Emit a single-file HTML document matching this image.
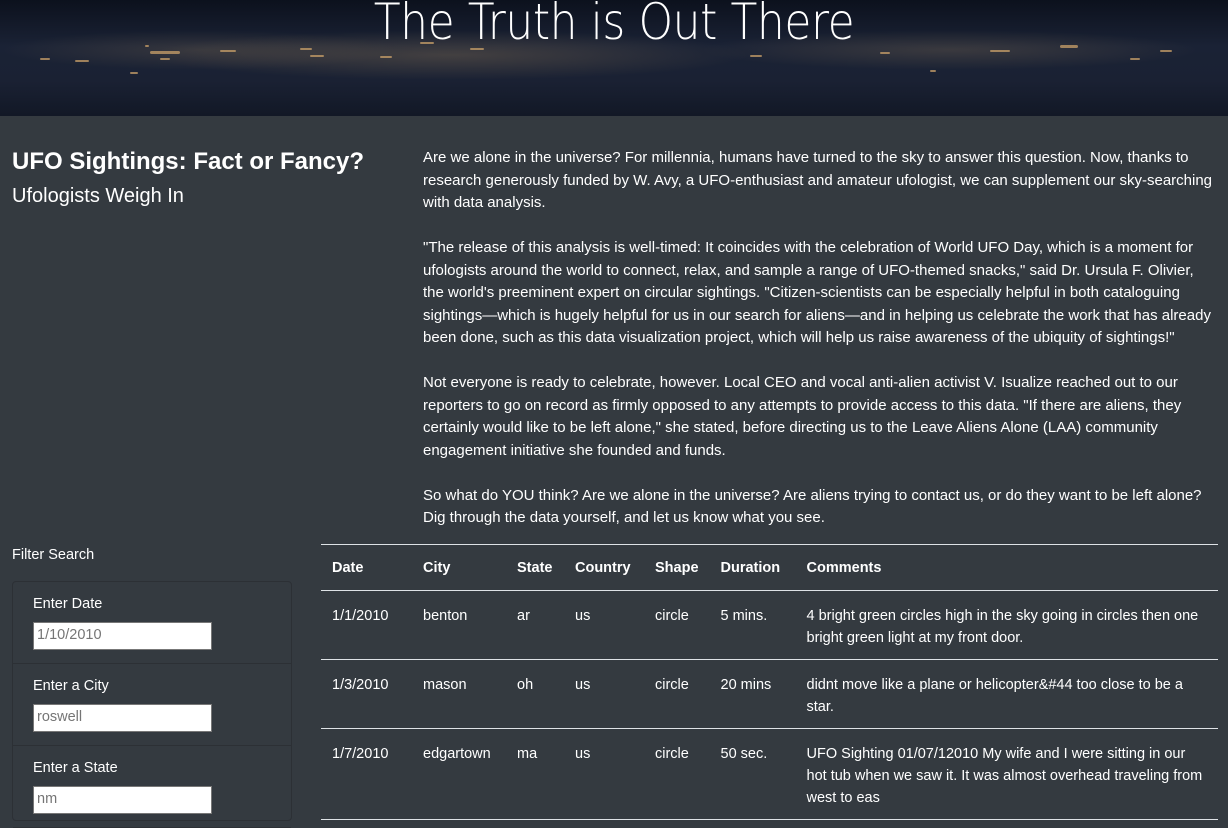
<!DOCTYPE html>
<html><head><style>
*{box-sizing:border-box;margin:0;padding:0}
body{width:1228px;height:816px;overflow:hidden;background:#343a40;color:#fff;font-family:"Liberation Sans",sans-serif;font-size:15px;position:relative}
.hero{position:absolute;left:0;top:0;width:1228px;height:116px;overflow:hidden;
background:radial-gradient(ellipse 300px 25px at 450px 55px,rgba(255,200,120,.18),transparent),
radial-gradient(ellipse 250px 20px at 950px 50px,rgba(255,200,120,.14),transparent),
radial-gradient(ellipse 200px 20px at 200px 50px,rgba(255,200,120,.12),transparent),
linear-gradient(180deg,#0c111d 0%,#1a2235 40%,#1a2133 70%,#121826 100%)}
.hero i{position:absolute;width:4px;height:2px;background:#c9a06a;border-radius:2px;opacity:.75}
.hero h1{position:absolute;left:0;width:100%;top:-7px;text-align:center;font-family:"DejaVu Sans ExtraLight","DejaVu Sans",sans-serif;font-weight:200;font-size:50px;color:#fff;transform:scaleX(0.88);letter-spacing:-0.5px}
.l1{position:absolute;left:12px;top:148px;font-size:24px;font-weight:bold}
.l2{position:absolute;left:12px;top:185px;font-size:20px}
.txt{position:absolute;left:423px;top:147px;width:795px;line-height:22.5px;font-size:15px}
.txt p{margin-bottom:22.5px}
.fs{position:absolute;left:12px;top:547px;font-size:14.5px}
.panel{position:absolute;left:12px;top:581px;width:280px;height:240px;border:1px solid #2c3035;border-radius:4px}
.it{height:82px;border-bottom:1px solid #2c3035;padding:14px 0 0 20px}
.it label{display:block;font-size:14.5px;margin-bottom:10px}
.it div{width:179px;height:28px;background:#fff;border:1px solid #777;color:#757575;font-size:14.5px;padding:4px 3px}
table{position:absolute;left:321px;top:544px;width:897px;border-collapse:collapse;font-size:14.5px}
th{text-align:left;font-weight:bold;height:46px;border-top:1px solid #dee2e6;border-bottom:1px solid #dee2e6;padding:0 11px;vertical-align:middle}
td{vertical-align:top;padding:14px 11px 10px;line-height:22px;border-bottom:1px solid #dee2e6}
</style></head><body>
<div class="hero">
<i style="left:145px;top:45px"></i><i style="left:160px;top:58px;width:10px"></i><i style="left:75px;top:60px;width:14px"></i><i style="left:130px;top:72px;width:8px"></i>
<i style="left:220px;top:50px;width:16px"></i><i style="left:300px;top:48px;width:12px"></i><i style="left:40px;top:58px;width:10px"></i>
<i style="left:150px;top:51px;width:30px;height:3px"></i><i style="left:310px;top:55px;width:14px"></i>
<i style="left:420px;top:42px;width:14px"></i><i style="left:470px;top:48px;width:14px"></i>
<i style="left:380px;top:56px;width:12px"></i><i style="left:750px;top:55px;width:12px"></i>
<i style="left:880px;top:52px;width:10px"></i><i style="left:990px;top:50px;width:20px"></i>
<i style="left:1060px;top:45px;width:18px;height:3px"></i><i style="left:1160px;top:50px;width:12px"></i>
<i style="left:1130px;top:58px;width:10px"></i><i style="left:930px;top:70px;width:6px"></i>
<h1>The Truth is Out There</h1></div>
<div class="l1">UFO Sightings: Fact or Fancy?</div>
<div class="l2">Ufologists Weigh In</div>
<div class="txt">
<p>Are we alone in the universe? For millennia, humans have turned to the sky to answer this question. Now, thanks to research generously funded by W. Avy, a UFO-enthusiast and amateur ufologist, we can supplement our sky-searching with data analysis.</p>
<p>"The release of this analysis is well-timed: It coincides with the celebration of World UFO Day, which is a moment for ufologists around the world to connect, relax, and sample a range of UFO-themed snacks," said Dr. Ursula F. Olivier, the world's preeminent expert on circular sightings. "Citizen-scientists can be especially helpful in both cataloguing sightings—which is hugely helpful for us in our search for aliens—and in helping us celebrate the work that has already been done, such as this data visualization project, which will help us raise awareness of the ubiquity of sightings!"</p>
<p>Not everyone is ready to celebrate, however. Local CEO and vocal anti-alien activist V. Isualize reached out to our reporters to go on record as firmly opposed to any attempts to provide access to this data. "If there are aliens, they certainly would like to be left alone," she stated, before directing us to the Leave Aliens Alone (LAA) community engagement initiative she founded and funds.</p>
<p>So what do YOU think? Are we alone in the universe? Are aliens trying to contact us, or do they want to be left alone? Dig through the data yourself, and let us know what you see.</p>
</div>
<div class="fs">Filter Search</div>
<div class="panel">
<div class="it"><label>Enter Date</label><div>1/10/2010</div></div>
<div class="it"><label>Enter a City</label><div>roswell</div></div>
<div class="it"><label>Enter a State</label><div>nm</div></div>
</div>
<table>
<colgroup><col style="width:91px"><col style="width:94px"><col style="width:58px"><col style="width:80px"><col style="width:65px"><col style="width:86px"><col></colgroup>
<tr><th>Date</th><th>City</th><th>State</th><th>Country</th><th>Shape</th><th>Duration</th><th>Comments</th></tr>
<tr><td>1/1/2010</td><td>benton</td><td>ar</td><td>us</td><td>circle</td><td>5 mins.</td><td>4 bright green circles high in the sky going in circles then one bright green light at my front door.</td></tr>
<tr><td>1/3/2010</td><td>mason</td><td>oh</td><td>us</td><td>circle</td><td>20 mins</td><td>didnt move like a plane or helicopter&amp;#44 too close to be a star.</td></tr>
<tr><td>1/7/2010</td><td>edgartown</td><td>ma</td><td>us</td><td>circle</td><td>50 sec.</td><td>UFO Sighting 01/07/12010 My wife and I were sitting in our hot tub when we saw it. It was almost overhead traveling from west to eas</td></tr>
</table>
</body></html>
